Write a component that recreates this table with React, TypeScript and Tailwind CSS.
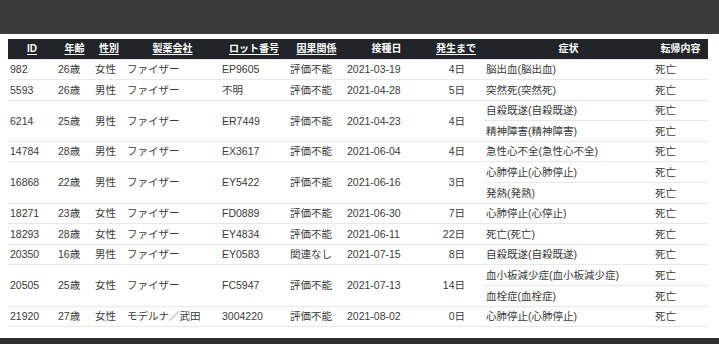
import React from 'react';

type Row = {
  id: string;
  age: string;
  sex: string;
  maker: string;
  lot: string;
  causal: string;
  date: string;
  days: string;
  symptoms: string[];
};

const rows: Row[] = [
  { id: '982', age: '26歳', sex: '女性', maker: 'ファイザー', lot: 'EP9605', causal: '評価不能', date: '2021-03-19', days: '4日', symptoms: ['脳出血(脳出血)'] },
  { id: '5593', age: '26歳', sex: '男性', maker: 'ファイザー', lot: '不明', causal: '評価不能', date: '2021-04-28', days: '5日', symptoms: ['突然死(突然死)'] },
  { id: '6214', age: '25歳', sex: '男性', maker: 'ファイザー', lot: 'ER7449', causal: '評価不能', date: '2021-04-23', days: '4日', symptoms: ['自殺既遂(自殺既遂)', '精神障害(精神障害)'] },
  { id: '14784', age: '28歳', sex: '男性', maker: 'ファイザー', lot: 'EX3617', causal: '評価不能', date: '2021-06-04', days: '4日', symptoms: ['急性心不全(急性心不全)'] },
  { id: '16868', age: '22歳', sex: '男性', maker: 'ファイザー', lot: 'EY5422', causal: '評価不能', date: '2021-06-16', days: '3日', symptoms: ['心肺停止(心肺停止)', '発熱(発熱)'] },
  { id: '18271', age: '23歳', sex: '女性', maker: 'ファイザー', lot: 'FD0889', causal: '評価不能', date: '2021-06-30', days: '7日', symptoms: ['心肺停止(心停止)'] },
  { id: '18293', age: '28歳', sex: '女性', maker: 'ファイザー', lot: 'EY4834', causal: '評価不能', date: '2021-06-11', days: '22日', symptoms: ['死亡(死亡)'] },
  { id: '20350', age: '16歳', sex: '男性', maker: 'ファイザー', lot: 'EY0583', causal: '関連なし', date: '2021-07-15', days: '8日', symptoms: ['自殺既遂(自殺既遂)'] },
  { id: '20505', age: '25歳', sex: '女性', maker: 'ファイザー', lot: 'FC5947', causal: '評価不能', date: '2021-07-13', days: '14日', symptoms: ['血小板減少症(血小板減少症)', '血栓症(血栓症)'] },
  { id: '21920', age: '27歳', sex: '女性', maker: 'モデルナ／武田', lot: '3004220', causal: '評価不能', date: '2021-08-02', days: '0日', symptoms: ['心肺停止(心肺停止)'] },
];

const headers: { label: string; w: string; sort: boolean }[] = [
  { label: 'ID', w: 'w-[48px]', sort: true },
  { label: '年齢', w: 'w-[37px]', sort: true },
  { label: '性別', w: 'w-[32px]', sort: true },
  { label: '製薬会社', w: 'w-[95px]', sort: true },
  { label: 'ロット番号', w: 'w-[68px]', sort: true },
  { label: '因果関係', w: 'w-[57px]', sort: true },
  { label: '接種日', w: 'w-[83px]', sort: false },
  { label: '発生まで', w: 'w-[56px]', sort: true },
  { label: '症状', w: 'w-[169px]', sort: false },
  { label: '転帰内容', w: 'w-[55px]', sort: false },
];

const cell = 'h-[20.6px] py-0 px-[2px] align-middle border-t border-[#e6e8ea]';

export default function App() {
  return (
    <div
      className="flex h-[344px] w-[719px] flex-col overflow-hidden bg-white text-[#3a3a3a]"
      style={{ fontFamily: '"Liberation Sans", "Noto Sans CJK JP", sans-serif' }}
    >
      <div className="h-[34px] shrink-0 bg-[#3b3b3b]" />
      <div className="flex-1 px-2 pt-[5px]">
        <table className="w-[700px] table-fixed border-collapse text-[10.5px] leading-none">
          <thead>
            <tr className="h-[20px] bg-[#212529] text-white">
              {headers.map((h) => (
                <th key={h.label} className={`${h.w} p-0 text-center text-[10px] font-bold`}>
                  <span className={h.sort ? 'underline underline-offset-2' : ''}>{h.label}</span>
                </th>
              ))}
            </tr>
          </thead>
          <tbody>
            {rows.flatMap((r) =>
              r.symptoms.map((s, i) => (
                <tr key={r.id + '-' + i}>
                  {i === 0 && (
                    <>
                      <td rowSpan={r.symptoms.length} className={cell}>{r.id}</td>
                      <td rowSpan={r.symptoms.length} className={cell}>{r.age}</td>
                      <td rowSpan={r.symptoms.length} className={cell}>{r.sex}</td>
                      <td rowSpan={r.symptoms.length} className={cell}>{r.maker}</td>
                      <td rowSpan={r.symptoms.length} className={cell}>{r.lot}</td>
                      <td rowSpan={r.symptoms.length} className={cell}>{r.causal}</td>
                      <td rowSpan={r.symptoms.length} className={cell}>{r.date}</td>
                      <td rowSpan={r.symptoms.length} className={`${cell} pr-[19px] text-right`}>{r.days}</td>
                    </>
                  )}
                  <td className={cell}>{s}</td>
                  <td className={cell}>死亡</td>
                </tr>
              ))
            )}
            <tr>
              <td colSpan={10} className="h-0 border-t border-[#e6e8ea] p-0" />
            </tr>
          </tbody>
        </table>
      </div>
      <div className="h-[6px] shrink-0 bg-[#2f2f2f]" />
    </div>
  );
}
